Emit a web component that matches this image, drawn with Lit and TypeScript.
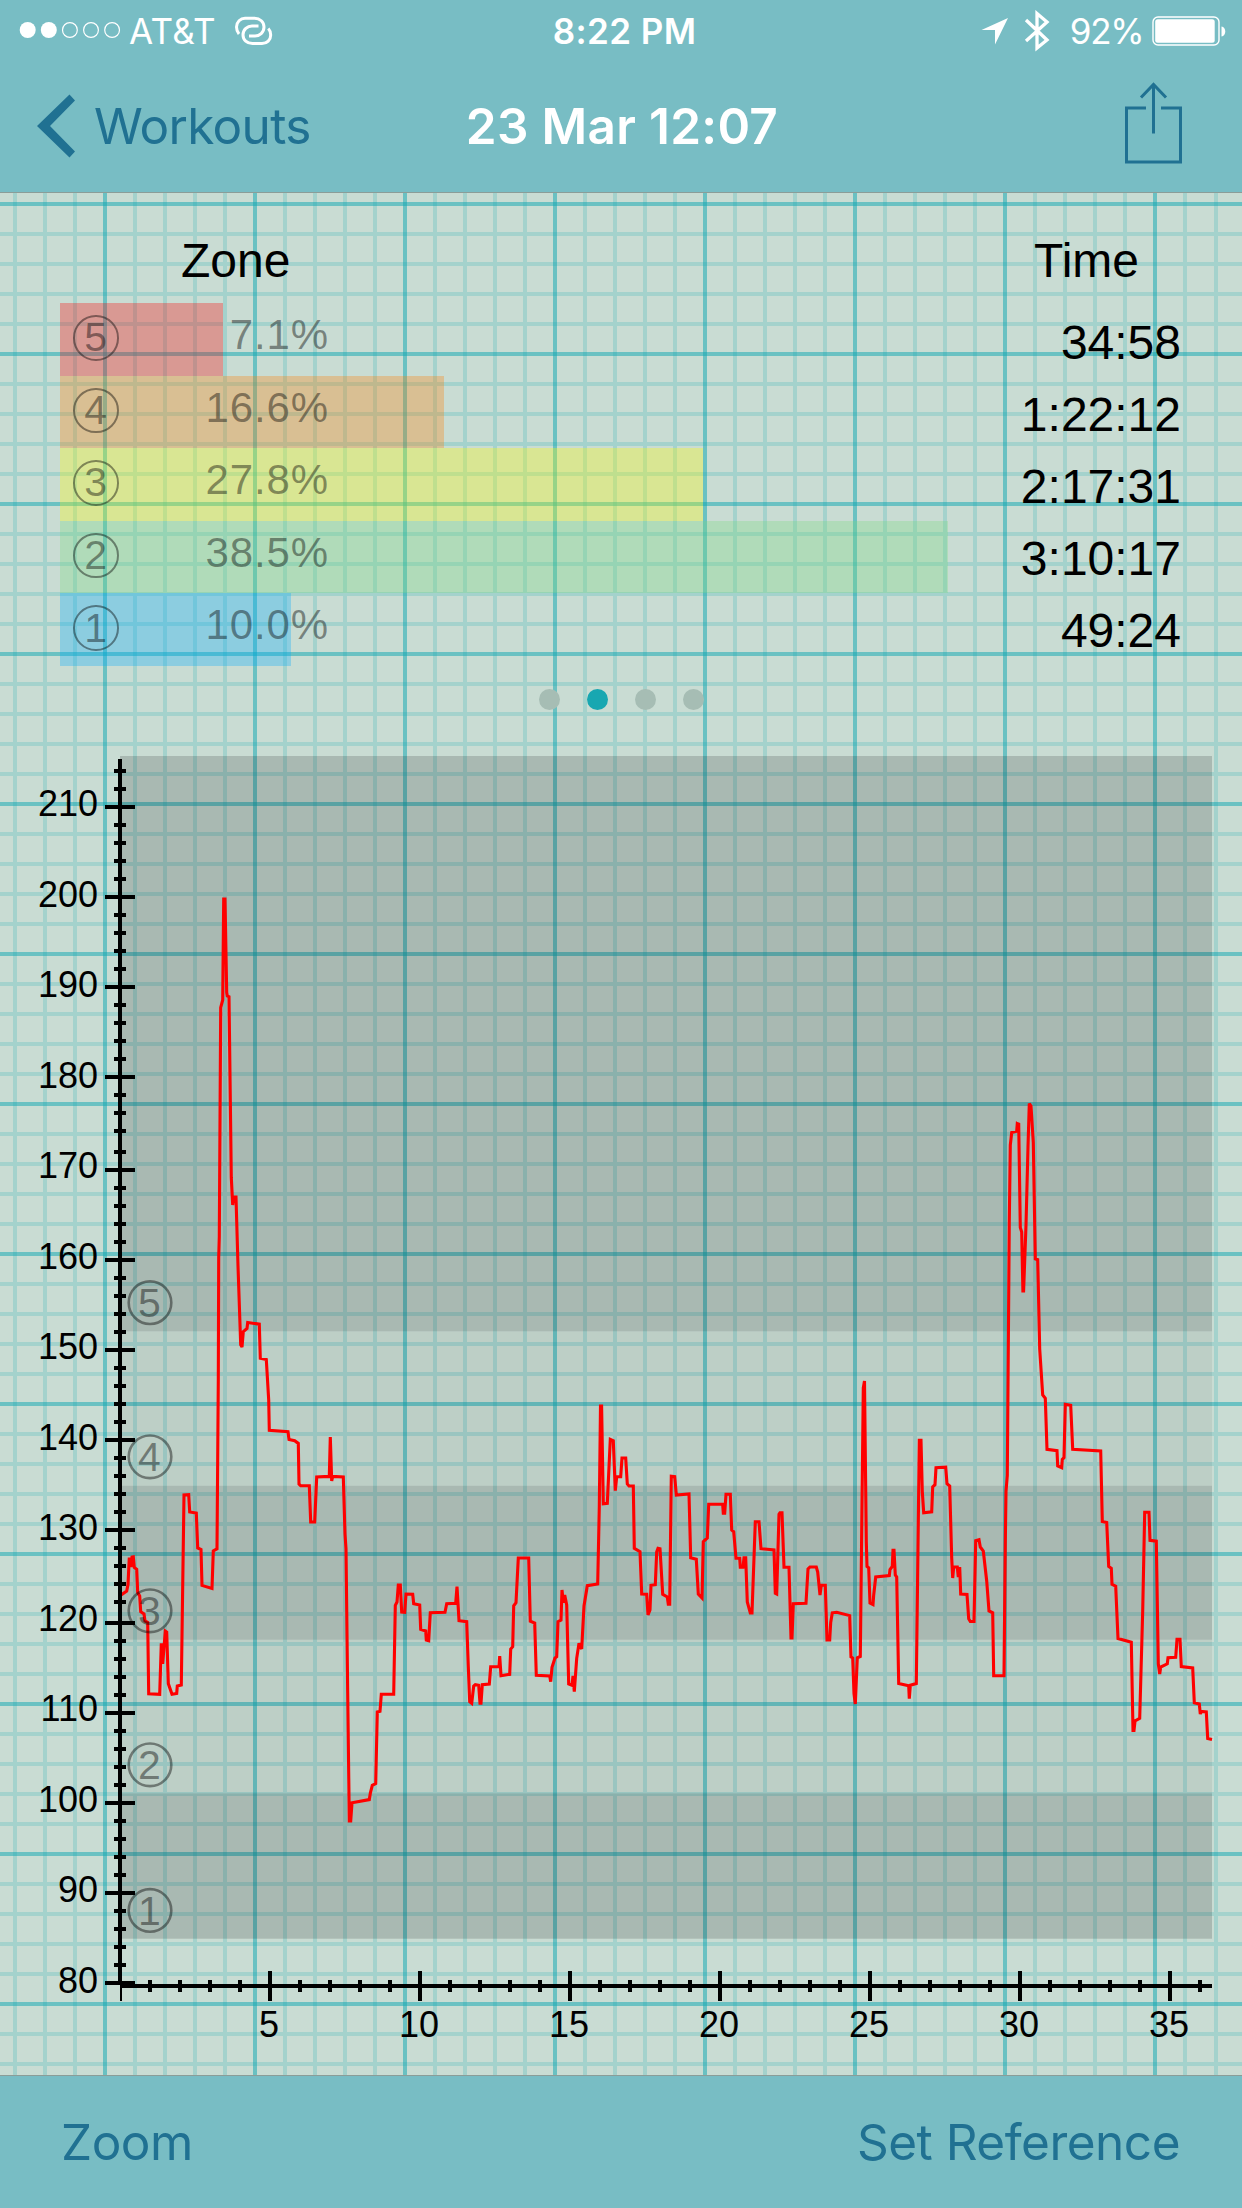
import { LitElement, html, svg, css } from "lit";
import { customElement } from "lit/decorators.js";

interface Zone {
  id: number;
  percent: string;
  time: string;
  width: number;
}

const ZONES: Zone[] = [
  { id: 5, percent: "7.1%", time: "34:58", width: 163 },
  { id: 4, percent: "16.6%", time: "1:22:12", width: 383.7 },
  { id: 3, percent: "27.8%", time: "2:17:31", width: 642.5 },
  { id: 2, percent: "38.5%", time: "3:10:17", width: 887.7 },
  { id: 1, percent: "10.0%", time: "49:24", width: 230.6 },
];

// Heart rate trace, in plot coordinates: x,y pairs.
const TRACE = `
120.7,1595.2 126.7,1591 128,1584.5 129.3,1557.7 131,1567 132,1557 133.3,1556.8 134.3,1567.5 136.7,1569.3 137.7,1592.5
139.7,1596 140.7,1611.7 144,1614 145,1621 147.7,1622.4 148.7,1693.8 159.7,1694.3 161.3,1643.4 162.7,1664 165.3,1631
166.7,1632 168.3,1683.6 172,1694.3 176.7,1693.4 177.3,1686 181.3,1685 184,1495 188.7,1494.7 189.7,1512 196.3,1513
197.7,1548 201,1549.6 202,1585.4 212,1588.5 213.3,1551 217,1548.8 218.3,1380 218.7,1257.7 219.3,1236.6 220.7,1007.7
222.7,1000 223.7,899 225,899 226.7,992.5 227.3,996 229,996.7 231.3,1177.7 232.7,1205 233.7,1197 236,1197
238,1266 240.7,1344.8 242,1347 243.3,1331.7 247,1328.4 247.7,1322.5 259.3,1324.2 260.3,1358.3 266.3,1359.5 268.7,1400
269.3,1430.4 288,1431.8 289,1439.4 294.7,1440.7 298.3,1443.4 299,1484 300.7,1485.8 309.3,1485.8 310.7,1522 314.7,1522
316.7,1476.9 329.3,1476.4 330.3,1437 331.7,1481 332.7,1476.4 343.3,1476.9 345,1534 346,1548.8 347.7,1692.5 349.3,1821
350.7,1821 352,1802.8 369.3,1799.6 370.3,1793.4 372.3,1785.4 375.7,1783.6 377.3,1712 380,1711.3 381.3,1694.3
393.7,1694.3 395.3,1605.4 397,1602 398.3,1585 400.3,1585 401.7,1612 404.7,1612.3 406,1594 412.7,1594.3 413.7,1603.7
419.7,1605 420.7,1629.3 425.7,1631 426.3,1640 428.7,1640.7 430.3,1612.7 445,1612.3 446.7,1603.7 455.7,1603.3 457,1586.7
459,1620.7 466.7,1621.7 468.3,1666.7 469.7,1701.7 471.7,1703.3 473.7,1686 475.3,1684.7 478.7,1685.3 480,1703.3
481,1703.3 482.3,1684.7 489.3,1684 490.7,1666.7 499,1666.7 499.7,1656 501,1675.7 509.7,1674.3 510.7,1649 512.7,1646.7
513.7,1605.7 516,1602.7 518.3,1558 528.7,1558 530.3,1621.3 534.7,1623 536.3,1675.3 549.7,1676 550.7,1681.7 552,1667.3
555,1658 556.7,1656.7 558,1621.7 561,1620 562,1590 563.3,1602.7 564.7,1595 566.7,1605 568.7,1684 572,1685.3
573,1676 574.3,1691.7 576.7,1658.3 579,1643.3 581.7,1649 584,1606 587.3,1585.7 597.7,1584 599.3,1506.7 600.5,1406
601.6,1406 603.3,1503.7 607.3,1503.3 610.3,1439.3 613.3,1440.7 615.3,1490.7 616.7,1476.7 620.7,1476.7 622,1458 625.7,1458
627.3,1484 629,1486 633.3,1486 634.3,1548.3 640,1551.7 641.7,1594 646.7,1594.3 648,1615 650,1610 651,1585.3 655.3,1584.7
656.7,1551.7 658,1548.3 660,1548.7 662.7,1594.3 667.3,1597 668.3,1604.3 669.7,1604.3 671.3,1476.3 674.7,1476.7
676.3,1495 689,1494 690.7,1557.7 696.3,1559.3 698.3,1594 702,1598 703.3,1541.7 707.3,1538 708.7,1504.3 722.7,1504.3
723.3,1513.3 724.7,1513.3 726,1494.3 730.3,1494.3 731.7,1530 733.7,1531.7 736,1558.3 739.7,1558.3 740.3,1567.3
743,1567.3 744,1557.7 745.7,1557.7 747.3,1602 750.3,1613 752,1613 755.3,1521.7 759,1521.7 761,1548.7 774,1550
775.3,1593.3 776.7,1594 779,1514.3 780,1512.7 782,1512.7 784,1567.3 789,1567.3 791,1638 792,1638 793.3,1603.7
806,1603.3 808,1569 810,1567 816.3,1567 817.7,1572 820,1595 821.3,1585.3 825.3,1585.3 827,1640 829.7,1640 830.7,1622.4
832.3,1612.8 836.7,1612.3 849.7,1615.6 851,1656.9 852.7,1658 854,1693.6 855.3,1704 857.3,1657.8 860.3,1656.4
862.3,1477.8 863.3,1388 864.5,1381 866.3,1542 867,1566.4 868.7,1567.8 870,1603 873,1604.5 873.7,1595 875.7,1577
889.3,1575.6 890,1569.6 892.3,1566.4 893,1550.4 894,1550.4 895.3,1575 896.7,1577 898.7,1683.5 908.7,1685.8 909.3,1698.7
910.3,1685.3 916.3,1683.5 918,1546.7 919.3,1440.2 921,1440.2 922.3,1491.6 923.7,1512.7 931.7,1511.8 932.7,1487
935,1484.7 936,1467.7 945.7,1467.2 947,1483.8 949.7,1486 951.7,1558 952.7,1578 953.7,1567 957.3,1567 958.3,1577
959.7,1567 960.7,1594 967,1594.4 968.7,1618.8 970.3,1621.5 974,1621.5 975.7,1540.7 979,1539.8 980.3,1547 983.3,1551
986.7,1581 989,1611 992.7,1612.8 993.7,1675.7 1004,1675.7 1005.3,1542 1006,1491.6 1007.3,1475.5 1009.3,1220.7
1010.3,1145 1011.7,1132.5 1016.7,1131.2 1017.3,1123.5 1018.7,1124 1020.3,1227.6 1021.7,1232 1022.9,1291 1023.6,1291
1026,1225 1028,1147 1029.3,1103.5 1031,1106 1033.3,1142.6 1035.3,1258.8 1037.7,1259.7 1039.7,1349 1042.7,1395
1045.3,1398.4 1047,1449.4 1057,1450.7 1057.7,1466 1061.7,1467.7 1062.3,1459.5 1064,1457.6 1065.3,1404.4 1070.7,1405.3
1072.7,1449.4 1100.7,1451 1102.3,1521.4 1106.7,1522.4 1108.7,1566.4 1111.3,1568.3 1112,1584.3 1115.7,1586.2
1118,1638.5 1131.3,1642.2 1133,1730.5 1134,1730.5 1135,1721 1139.7,1718.4 1142.7,1611 1144.7,1512.3 1149,1512.3
1150,1540.3 1156.3,1541.2 1158.3,1663.8 1159.7,1674 1160.7,1667 1167.3,1663.8 1168,1657.8 1175.7,1657.3 1177,1639.4
1180,1639.4 1181.3,1666.5 1192.7,1667.9 1194.3,1702.8 1199.3,1704 1200.3,1714 1201.3,1711.5 1206.3,1712 1207.7,1738.6
1212,1739.5`.trim().replace(/\s+/g, " ");

const BADGES = [
  { id: 5, y: 1302.7 },
  { id: 4, y: 1456.8 },
  { id: 3, y: 1610.8 },
  { id: 2, y: 1764.8 },
  { id: 1, y: 1910.4 },
];

const range = (n: number) => Array.from({ length: n }, (_, i) => i);

@customElement("graph-paper")
class GraphPaper extends LitElement {
  static styles = css`
    :host { display: block; }
    svg { display: block; width: 100%; height: 100%; }
    .minor { fill: none; stroke: #14a8b2; stroke-opacity: 0.2; stroke-width: 4; }
    .major { stroke: #14a8b2; stroke-opacity: 0.52; stroke-width: 4; }
  `;
  render() {
    const cols = range(41).filter((i) => i % 5 !== 3).map((i) => (i === 40 ? 1216 : 15 + i * 30));
    const rows = range(64).filter((i) => i % 5 !== 0).map((i) => 204 + i * 30).filter((y) => y < 2076);
    const minor = cols.map((x) => `M${x} 193V2076`).join("") + rows.map((y) => `M0 ${y}H1242`).join("");
    return html`<svg viewBox="0 193 1242 1882" preserveAspectRatio="none">
      <path class="minor" d=${minor} />
      ${range(8).map((i) => svg`<line class="major" x1=${105 + i * 150} x2=${105 + i * 150} y1="193" y2="2076" />`)}
      ${range(13).map((i) => svg`<line class="major" x1="0" x2="1242" y1=${204 + i * 150} y2=${204 + i * 150} />`)}
    </svg>`;
  }
}

@customElement("status-bar")
class StatusBar extends LitElement {
  static styles = css`
    :host {
      display: flex; align-items: center; justify-content: space-between;
      height: 60px; padding: 2px 16px 0 19px; box-sizing: border-box;
      color: #fff; font: 400 35px/60px Inter, sans-serif;
    }
    .side { display: flex; align-items: center; flex: 1 1 0; height: 58px; }
    .right { justify-content: flex-end; }
    .clock { font-weight: 600; letter-spacing: 0.4px; margin-left: 4px; }
    .carrier { margin-left: 8px; letter-spacing: 0.3px; }
    .level { letter-spacing: -1.2px; margin-right: 8.5px; }
    svg { display: block; }
    .link { margin-left: 19px; }
    .arrow { margin-right: 16px; }
    .bt { margin-right: 20px; }
  `;
  render() {
    return html`
      <div class="side">
        <svg width="102" height="18" viewBox="0 0 102 18" fill="none" stroke="#fff">
          ${range(5).map((i) => svg`<circle cx=${8.7 + i * 21.1} cy="8" r=${i < 2 ? 8 : 7.4}
            fill=${i < 2 ? "#fff" : "none"} stroke-width=${i < 2 ? 0 : 1.2} />`)}
        </svg>
        <span class="carrier">AT&amp;T</span>
        <svg class="link" width="38" height="30" viewBox="237 15 38 30" fill="none" stroke="#fff" stroke-width="3">
          <path d="M241 33C239.300 31 238.500 28.500 238.500 26C238.500 21 242.500 17.200 247 17.200H256.500C262 17.200 266 21 266 26C266 31.500 261.500 35 257 35H251" />
          <path d="M270.300 27.500C272 29.300 272.700 31.500 272.700 34C272.700 39 269 42.600 264 42.600H254.500C249 42.600 245 39 245 34C245 28.500 249.500 25 254 25H260.500" />
        </svg>
      </div>
      <span class="clock">8:22 PM</span>
      <div class="side right">
        <svg class="arrow" width="27" height="27" viewBox="981 18 27 27"><path d="M1008 18L981.500 30H995V44.500Z" fill="#fff" /></svg>
        <svg class="bt" width="26" height="42" viewBox="1024.500 10 26 42" fill="none" stroke="#fff" stroke-width="3.300">
          <path d="M1026.500 20L1047.500 40L1037.500 48V13.500L1047.500 22L1026.500 41" />
        </svg>
        <span class="level">92%</span>
        <svg width="74" height="30" viewBox="1151.500 15.500 74 30">
          <rect x="1152.500" y="16.500" width="66" height="28" rx="5" fill="none" stroke="#fff" stroke-width="1.400" />
          <rect x="1154.700" y="18.700" width="59.500" height="23.600" rx="2.500" fill="#fff" />
          <path d="M1221 26C1226 26.500 1226 35.500 1221 36Z" fill="#fff" />
        </svg>
      </div>`;
  }
}

@customElement("nav-bar")
class NavBar extends LitElement {
  static styles = css`
    :host {
      display: grid; grid-template-columns: 1fr auto 1fr; align-items: center;
      height: 132px; padding: 0 37px; box-sizing: border-box;
      font: 400 49.5px/60px Inter, sans-serif; color: #207192;
    }
    .back { display: flex; align-items: center; gap: 18px; letter-spacing: -0.7px; }
    .title { color: #fff; font-weight: 600; letter-spacing: 0.3px; margin-left: 2px; }
    .share { justify-self: end; margin: -7px 23px 0 0; }
    svg { display: block; }
  `;
  render() {
    return html`
      <div class="back">
        <svg width="39" height="64" viewBox="37 94.500 39 64"><path d="M69.500 95L75 101L50 126.500L75 152L69.500 158L37 126.500Z" fill="#207192" /></svg>
        <span>Workouts</span>
      </div>
      <span class="title">23 Mar 12:07</span>
      <svg class="share" width="57" height="82" viewBox="1125 81.500 57 82" fill="none" stroke="#207192" stroke-width="3">
        <path d="M1146 107.500H1126.500V161.500H1180.500V107.500H1161" />
        <path d="M1153.500 133V84M1141 97L1153.500 84L1166 97" />
      </svg>`;
  }
}

@customElement("zone-summary")
class ZoneSummary extends LitElement {
  static styles = css`
    :host {
      display: block; height: 547px; padding-top: 41px; box-sizing: border-box;
      font: 400 48px/54px "Liberation Sans", sans-serif; color: #000;
    }
    .heads { display: flex; justify-content: space-between; height: 69px; padding: 0 103px 0 181px; }
    .body { display: flex; justify-content: space-between; padding: 0 61px 0 60px; height: 363px; }
    .bars { display: flex; flex-direction: column; flex: none; width: 900px; }
    .row { height: 72.6px; display: flex; align-items: flex-start; }
    .bar { flex: none; height: 72.6px; width: var(--w); margin-right: calc(-1 * var(--w)); }
    .z5 { background: rgba(255, 0, 0, 0.3); }
    .z4 { background: rgba(255, 127, 0, 0.3); }
    .z3 { background: rgba(255, 255, 0, 0.3); }
    .z2 { background: rgba(120, 217, 127, 0.3); }
    .z1 { background: rgba(0, 173, 255, 0.3); }
    .caption { display: flex; width: 269px; height: 72.6px; padding-left: 13px; box-sizing: border-box; color: rgba(0, 0, 0, 0.42); }
    .num {
      display: flex; align-items: center; justify-content: center;
      width: 45.5px; height: 45.5px; margin-top: 12px; box-sizing: border-box; border: 2.8px solid rgba(0, 0, 0, 0.42);
      border-radius: 50%; font-size: 41px; line-height: 41px;
    }
    .pct { flex: 1; text-align: right; font-size: 42px; line-height: 63px; letter-spacing: 0.9px; }
    .times { display: flex; flex-direction: column; text-align: right; padding-top: 3px; }
    .times span { height: 72px; line-height: 73px; }
    .dots { display: flex; justify-content: center; gap: 27px; padding-top: 23px; }
    .dot { width: 21px; height: 21px; border-radius: 50%; background: #a6bdb4; }
    .on { background: #18a7b1; }
  `;
  render() {
    return html`
      <div class="heads"><span>Zone</span><span>Time</span></div>
      <div class="body">
        <div class="bars">
          ${ZONES.map((z) => html`<div class="row">
            <div class="bar z${z.id}" style="--w:${z.width}px"></div>
            <div class="caption"><span class="num">${z.id}</span><span class="pct">${z.percent}</span></div>
          </div>`)}
        </div>
        <div class="times">${ZONES.map((z) => html`<span>${z.time}</span>`)}</div>
      </div>
      <div class="dots">${range(4).map((i) => html`<i class="dot ${i === 1 ? "on" : ""}"></i>`)}</div>`;
  }
}

@customElement("rate-chart")
class RateChart extends LitElement {
  static styles = css`
    :host { display: block; height: 1335px; }
    svg { display: block; width: 1242px; height: 1335px; }
    text { font-family: "Liberation Sans", sans-serif; font-size: 36px; fill: #000; }
    .dark { fill: #000; fill-opacity: 0.157; }
    .light { fill: #000; fill-opacity: 0.057; }
    .axis { stroke: #000; stroke-width: 4; }
    .trace { fill: none; stroke: #f00; stroke-width: 3.1; stroke-miterlimit: 3; }
    .ring { fill: none; stroke: #000; stroke-opacity: 0.42; stroke-width: 2.6; }
    .badge { font-size: 41px; fill-opacity: 0.42; text-anchor: middle; }
    .ylab { text-anchor: end; }
    .xlab { text-anchor: middle; }
  `;
  private tickY(v: number) {
    return 1983 - (v - 80) * 9 - (v >= 122 ? 3 : 0) - (v >= 174 ? 3 : 0);
  }
  render() {
    return html`<svg viewBox="0 740 1242 1335">
      <rect class="dark" x="120" y="756" width="1092" height="575.3" />
      <rect class="light" x="120" y="1331.3" width="1092" height="154.5" />
      <rect class="dark" x="120" y="1485.8" width="1092" height="153.9" />
      <rect class="light" x="120" y="1639.7" width="1092" height="153.7" />
      <rect class="dark" x="120" y="1793.4" width="1092" height="145.3" />
      <polyline class="trace" points=${TRACE} />
      <line class="axis" x1="120" x2="120" y1="759" y2="1985" />
      ${range(68).map((i) => {
        const v = 80 + i * 2;
        const half = v % 10 === 0 ? 15 : 6;
        const y = this.tickY(v);
        return svg`<line class="axis" x1=${120 - half} x2=${120 + half} y1=${y} y2=${y} />`;
      })}
      ${range(14).map((i) => svg`<text class="ylab" x="98" y=${1992.5 - i * 90.5}>${80 + i * 10}</text>`)}
      <line class="axis" x1="120" x2="1212" y1="1986" y2="1986" />
      <line x1="121" x2="121" y1="1984" y2="2001" stroke="#000" stroke-width="2" />
      ${range(36).map((i) => {
        const x = 150 + i * 30;
        const half = (i + 1) % 5 === 0 ? 15 : 6;
        return svg`<line class="axis" x1=${x} x2=${x} y1=${1986 - half} y2=${1986 + half} />`;
      })}
      ${range(7).map((i) => svg`<text class="xlab" x=${269 + i * 150} y="2036.7">${5 + i * 5}</text>`)}
      ${BADGES.map((b) => svg`<circle class="ring" cx="150" cy=${b.y} r="21.3" />
        <text class="badge" x="149.5" y=${b.y + 14.2}>${b.id}</text>`)}
    </svg>`;
  }
}

@customElement("app-root")
class AppRoot extends LitElement {
  static styles = css`
    :host { display: flex; flex-direction: column; width: 1242px; height: 2208px; overflow: hidden; background: #c9dcd3; }
    .top { flex: none; height: 193px; box-sizing: border-box; background: #78bdc4; border-bottom: 1px solid #8b9d98; }
    main { position: relative; flex: none; height: 1882px; }
    .paper { position: absolute; inset: 0; }
    .content { position: relative; display: flex; flex-direction: column; }
    .tools {
      flex: none; height: 133px; box-sizing: border-box; display: flex; align-items: center; justify-content: space-between;
      padding: 0 62px 0 61px; background: #78bdc4; border-top: 1px solid #8b9d98; color: #207192;
      font: 400 49.5px/60px Inter, sans-serif; letter-spacing: -0.5px;
    }
  `;
  render() {
    return html`
      <div class="top"><status-bar></status-bar><nav-bar></nav-bar></div>
      <main>
        <graph-paper class="paper"></graph-paper>
        <div class="content"><zone-summary></zone-summary><rate-chart></rate-chart></div>
      </main>
      <div class="tools"><span>Zoom</span><span>Set Reference</span></div>`;
  }
}
